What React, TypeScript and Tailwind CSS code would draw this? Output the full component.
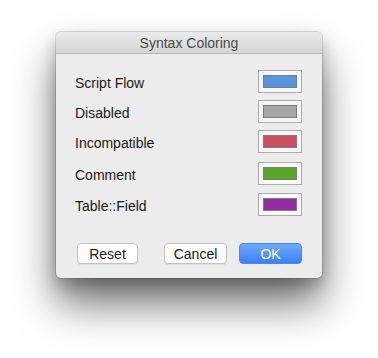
const rows = [
  { label: "Script Flow", color: "bg-[#5894e0]", mt: "mt-0" },
  { label: "Disabled", color: "bg-[#a6a6a6]", mt: "mt-[7px]" },
  { label: "Incompatible", color: "bg-[#cc5062]", mt: "mt-[7px]" },
  { label: "Comment", color: "bg-[#58a527]", mt: "mt-[9px]" },
  { label: "Table::Field", color: "bg-[#942ca1]", mt: "mt-[8px]" },
];

function ColorWell({ color }: { color: string }) {
  return (
    <div className="w-[44px] h-[23px] border border-[#ababab] bg-[#f6f6f6] flex items-center justify-center">
      <div className={`w-[34px] h-[13px] border border-[#7d7d7d] ${color}`} />
    </div>
  );
}

export default function App() {
  return (
    <div className="w-[378px] h-[358px] bg-white pt-[32px] pl-[56px] font-['Liberation_Sans',Arial,sans-serif]">
      <div className="w-[266px] h-[246px] flex flex-col bg-[#ececec] rounded-[5px] shadow-[0_0_0_1px_rgba(0,0,0,0.12),0_26px_42px_rgba(0,0,0,0.55),0_8px_16px_rgba(0,0,0,0.22)]">
        <div className="h-[22px] shrink-0 rounded-t-[5px] bg-gradient-to-b from-[#ebebeb] to-[#d5d5d5] border-b border-[#b8b8b8] flex items-center justify-center">
          <span className="text-[14px] text-[#4a4a4a] leading-none pt-[1px]">Syntax Coloring</span>
        </div>
        <div className="flex-1 flex flex-col pt-[16px] pl-[19px] pr-[20px] pb-[14px]">
          {rows.map((r) => (
            <div key={r.label} className={`h-[23px] flex items-center justify-between ${r.mt}`}>
              <span className="text-[14px] leading-[16px] text-[#1a1a1a] pt-[3px]">{r.label}</span>
              <ColorWell color={r.color} />
            </div>
          ))}
          <div className="mt-auto flex items-center">
            <button className="ml-[2px] w-[61px] h-[21px] rounded-[4px] bg-white border border-[#c2c2c2] shadow-[0_1px_0_rgba(0,0,0,0.06)] text-[14px] text-[#1a1a1a] leading-none">
              Reset
            </button>
            <button className="ml-[26px] w-[63px] h-[21px] rounded-[4px] bg-white border border-[#c2c2c2] shadow-[0_1px_0_rgba(0,0,0,0.06)] text-[14px] text-[#1a1a1a] leading-none">
              Cancel
            </button>
            <button className="ml-[12px] w-[63px] h-[21px] rounded-[4px] bg-gradient-to-b from-[#6eaafb] to-[#3d7ff6] border border-[#4a86ee] text-[14px] text-white leading-none">
              OK
            </button>
          </div>
        </div>
      </div>
    </div>
  );
}
